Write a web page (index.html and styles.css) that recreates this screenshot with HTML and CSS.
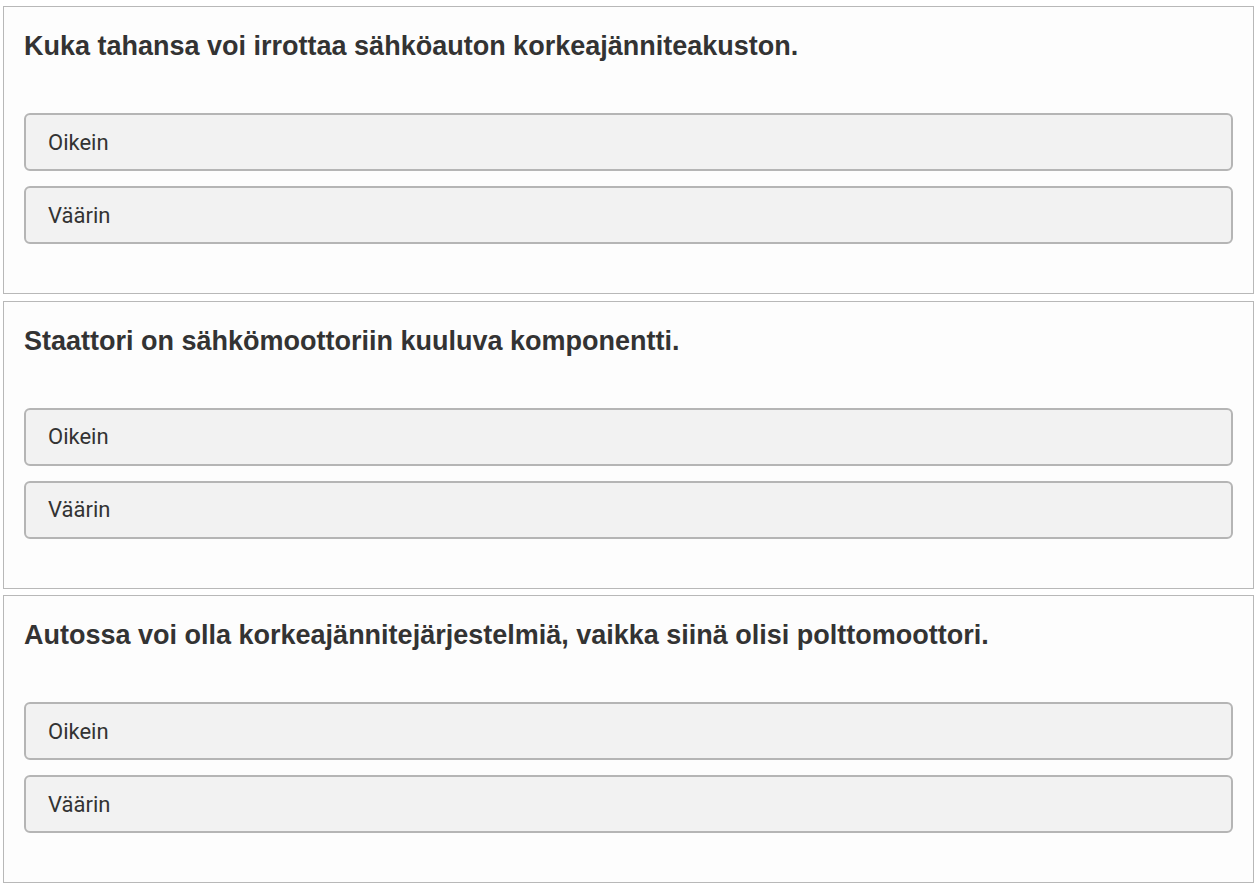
FILE: index.html
```html
<!DOCTYPE html>
<html>
    <head>
        <meta charset="utf-8">
        <link rel="stylesheet" href="styles.css">
    </head>
    <body>
        <div class="question">
            <h2>Kuka tahansa voi irrottaa sähköauton korkeajänniteakuston.</h2>
            <div class="options">
                <button class="option">Oikein</button>
                <button class="option">Väärin</button>
            </div>
        </div>
        <div class="question">
            <h2>Staattori on sähkömoottoriin kuuluva komponentti.</h2>
            <div class="options">
                <button class="option">Oikein</button>
                <button class="option">Väärin</button>
            </div>
        </div>
        <div class="question">
            <h2>Autossa voi olla korkeajännitejärjestelmiä, vaikka siinä olisi polttomoottori.</h2>
            <div class="options">
                <button class="option">Oikein</button>
                <button class="option">Väärin</button>
            </div>
        </div>
    </body>
</html>
```

FILE: styles.css
```css
body {
    margin: 0;
    padding: 6px 3px 0 3px;
    background: #fff;
    color: #333;
}
.question {
    border: solid 1px #b8b8b8;
    background: #fdfdfd;
    padding: 24px 20px 49px 20px;
    margin-bottom: 6.5px;
}
.question h2 {
    margin: 0 0 52px 0;
    font-family: "Liberation Sans", Arial, sans-serif;
    font-weight: bold;
    font-size: 27px;
    line-height: 30px;
    color: #333;
}
.options {
    display: flex;
    flex-direction: column;
    gap: 15px;
}
.option {
    box-sizing: border-box;
    height: 58px;
    width: 100%;
    padding: 0 22px;
    display: flex;
    align-items: center;
    text-align: left;
    background: #f2f2f2;
    border: solid 2px #b5b5b5;
    border-radius: 6px;
    font-family: Roboto, "Liberation Sans", sans-serif;
    font-size: 22px;
    color: #333;
}
```
